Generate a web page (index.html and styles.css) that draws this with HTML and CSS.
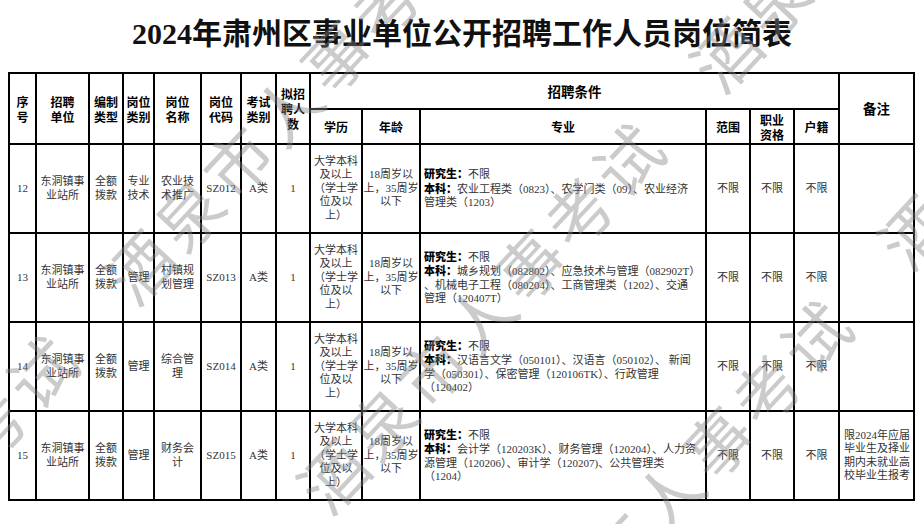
FILE: index.html
```html
<!DOCTYPE html>
<html lang="zh-CN">
<head>
<meta charset="utf-8">
<title>2024年肃州区事业单位公开招聘工作人员岗位简表</title>
<link rel="stylesheet" href="styles.css">
</head>
<body>
<h1 class="title">2024年肃州区事业单位公开招聘工作人员岗位简表</h1>
<table class="grid">
  <colgroup>
    <col class="c-no"><col class="c-unit"><col class="c-type"><col class="c-cat"><col class="c-name"><col class="c-code"><col class="c-exam"><col class="c-num">
    <col class="c-edu"><col class="c-age"><col class="c-major"><col class="c-range"><col class="c-qual"><col class="c-hukou"><col class="c-note">
  </colgroup>
  <thead>
    <tr class="h1">
      <th rowspan="2">序<br>号</th>
      <th rowspan="2">招聘<br>单位</th>
      <th rowspan="2">编制<br>类型</th>
      <th rowspan="2">岗位<br>类别</th>
      <th rowspan="2">岗位<br>名称</th>
      <th rowspan="2">岗位<br>代码</th>
      <th rowspan="2">考试<br>类别</th>
      <th rowspan="2">拟招<br>聘人<br>数</th>
      <th colspan="6" class="big">招聘条件</th>
      <th rowspan="2" class="big">备注</th>
    </tr>
    <tr class="h2">
      <th>学历</th>
      <th>年龄</th>
      <th>专业</th>
      <th>范围</th>
      <th>职业<br>资格</th>
      <th>户籍</th>
    </tr>
  </thead>
  <tbody>
    <tr class="r">
      <td>12</td><td>东洞镇事业站所</td><td>全额拨款</td><td>专业技术</td><td>农业技术推广</td><td>SZ012</td><td>A类</td><td>1</td>
      <td>大学本科及以上（学士学位及以上）</td><td class="age">18周岁以<br>上，35周岁<br>以下</td>
      <td class="major"><span class="lbl">研究生：</span>不限<br><span class="lbl">本科：</span>农业工程类（0823）、农学门类（09）、农业经济<br>管理类（1203）</td>
      <td>不限</td><td>不限</td><td>不限</td><td class="note"></td>
    </tr>
    <tr class="r">
      <td>13</td><td>东洞镇事业站所</td><td>全额拨款</td><td>管理</td><td>村镇规划管理</td><td>SZ013</td><td>A类</td><td>1</td>
      <td>大学本科及以上（学士学位及以上）</td><td class="age">18周岁以<br>上，35周岁<br>以下</td>
      <td class="major"><span class="lbl">研究生：</span>不限<br><span class="lbl">本科：</span>城乡规划（082802）、应急技术与管理（082902T）<br>、机械电子工程（080204）、工商管理类（1202）、交通<br>管理（120407T）</td>
      <td>不限</td><td>不限</td><td>不限</td><td class="note"></td>
    </tr>
    <tr class="r">
      <td>14</td><td>东洞镇事业站所</td><td>全额拨款</td><td>管理</td><td>综合管理</td><td>SZ014</td><td>A类</td><td>1</td>
      <td>大学本科及以上（学士学位及以上）</td><td class="age">18周岁以<br>上，35周岁<br>以下</td>
      <td class="major"><span class="lbl">研究生：</span>不限<br><span class="lbl">本科：</span>汉语言文学（050101）、汉语言（050102）、 新闻<br>学（050301）、保密管理（120106TK）、行政管理<br>（120402）</td>
      <td>不限</td><td>不限</td><td>不限</td><td class="note"></td>
    </tr>
    <tr class="r">
      <td>15</td><td>东洞镇事业站所</td><td>全额拨款</td><td>管理</td><td>财务会计</td><td>SZ015</td><td>A类</td><td>1</td>
      <td>大学本科及以上（学士学位及以上）</td><td class="age">18周岁以<br>上，35周岁<br>以下</td>
      <td class="major"><span class="lbl">研究生：</span>不限<br><span class="lbl">本科：</span>会计学（120203K）、财务管理（120204）、人力资<br>源管理（120206）、审计学（120207)、公共管理类<br>（1204）</td>
      <td>不限</td><td>不限</td><td>不限</td><td class="note">限2024年应届毕业生及择业期内未就业高校毕业生报考</td>
    </tr>
  </tbody>
</table>
<div class="wm" aria-hidden="true">
  <div class="wm-line wm-a">考试　酒泉市人事考试</div>
  <div class="wm-line wm-b">酒泉市人事考试　酒泉</div>
  <div class="wm-line wm-c">市人事考试　酒泉</div>
</div>
</body>
</html>
```
FILE: styles.css
```css
html, body {
  background: #fff;
}
body {
  margin: 8px;
  font-family: "Liberation Serif", "Noto Sans CJK SC", serif;
  color: #333;
}
.title {
  margin: 0;
  height: 64px;
  line-height: 52px;
  text-align: center;
  font-size: 30px;
  font-weight: 700;
  color: #111;
  font-family: "Liberation Serif", "Noto Sans CJK SC", serif;
}
.grid {
  border-collapse: collapse;
  table-layout: fixed;
  width: 905px;
}
.c-no { width: 27px; }
.c-unit { width: 53px; }
.c-type { width: 34px; }
.c-cat { width: 31px; }
.c-name { width: 47px; }
.c-code { width: 40px; }
.c-exam { width: 35px; }
.c-num { width: 34px; }
.c-edu { width: 52px; }
.c-age { width: 58px; }
.c-major { width: 286px; }
.c-range { width: 44px; }
.c-qual { width: 44px; }
.c-hukou { width: 45px; }
.c-note { width: 75px; }

.grid th, .grid td {
  border: 2px solid #000;
  padding: 0 2px;
  text-align: center;
  vertical-align: middle;
}
.grid th {
  font-family: "Noto Sans CJK SC", sans-serif;
  font-weight: 700;
  font-size: 12px;
  line-height: 15px;
  color: #000;
}
.grid th.big {
  font-size: 13.5px;
}
.grid td {
  font-size: 11px;
  line-height: 13.4px;
  color: #333;
}
.h1 { height: 36px; }
.h2 { height: 35px; }
.r { height: 89px; }

.grid td.age {
  padding: 0;
  white-space: nowrap;
}
.grid td.major {
  text-align: left;
  white-space: nowrap;
  padding-left: 3px;
}
.lbl {
  font-family: "Noto Sans CJK SC", sans-serif;
  font-weight: 900;
  color: #000;
}
.grid td.note {
  text-align: left;
  padding: 0 3px 0 4px;
}

.wm {
  position: fixed;
  left: 0;
  top: 0;
  width: 924px;
  height: 524px;
  overflow: hidden;
  pointer-events: none;
}
.wm-line {
  position: absolute;
  font-family: "Noto Sans CJK SC", sans-serif;
  font-weight: 400;
  font-size: 66px;
  line-height: 66px;
  letter-spacing: 6px;
  white-space: nowrap;
  color: rgba(130, 130, 130, 0.42);
  transform-origin: 33px 33px;
  transform: rotate(-47deg);
}
.wm-a { left: -43px; top: 390px; }
.wm-b { left: 298px; top: 441px; }
.wm-c { left: 584px; top: 513px; }
```
